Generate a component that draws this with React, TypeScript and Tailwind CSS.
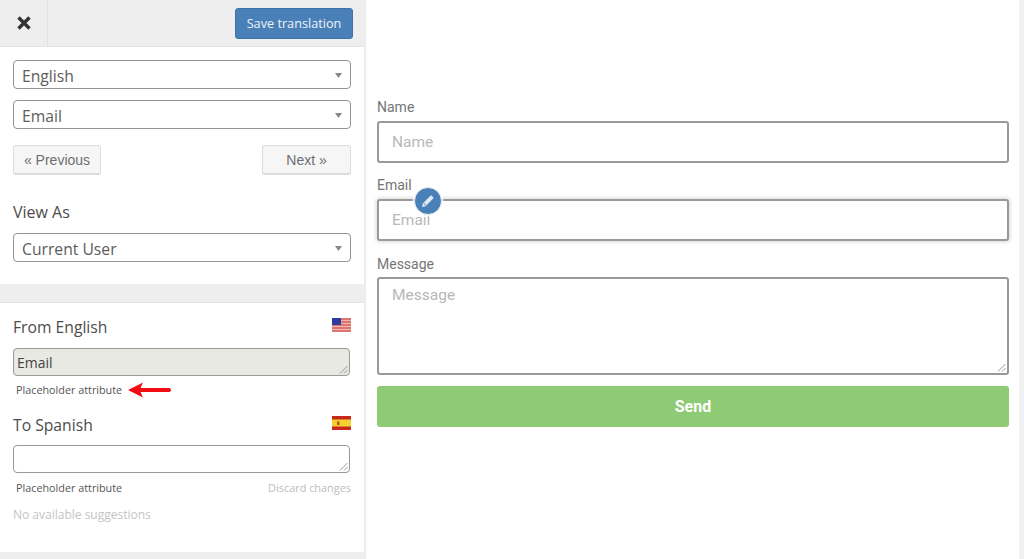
const sideFont = "font-['Open_Sans','Noto_Sans',sans-serif]";

function Caret() {
  return (
    <svg width="7" height="5" viewBox="0 0 7 5" className="shrink-0 mr-[1px] mt-[1px]">
      <path d="M0 0h7L3.5 5z" fill="#888" />
    </svg>
  );
}

function Select({ label }: { label: string }) {
  return (
    <div className="h-[29px] rounded-[4px] border border-[#949494] bg-white pl-[8px] pr-[7px] flex items-center justify-between">
      <span className="text-[15.7px] leading-[26px] text-[#5c5c5c] pt-[2px]">{label}</span>
      <Caret />
    </div>
  );
}

function Grip() {
  return (
    <svg width="9" height="9" viewBox="0 0 9 9" className="absolute right-[1px] bottom-[1px]">
      <path d="M8.5 1L1 8.5M8.5 5L5 8.5" stroke="#999" strokeWidth="1" fill="none" />
    </svg>
  );
}

function FlagUS() {
  return (
    <svg width="19" height="14" viewBox="0 0 19 14">
      <rect width="19" height="14" fill="#efb5ac" />
      <path d="M0 1h19M0 4h19M0 7h19M0 10h19M0 13h19" stroke="#d4605c" strokeWidth="1.4" />
      <rect width="9" height="7" fill="#2f3a9e" />
    </svg>
  );
}

function FlagES() {
  return (
    <svg width="19" height="14" viewBox="0 0 19 14">
      <rect width="19" height="14" fill="#c9281e" />
      <rect y="3.5" width="19" height="7" fill="#f6d02f" />
      <rect x="5" y="5.5" width="2.5" height="3.5" fill="#b5561c" />
    </svg>
  );
}

function Sidebar() {
  return (
    <aside className={`${sideFont} w-[366px] shrink-0 h-full flex flex-col bg-white border-r-2 border-[#ececec]`}>
      <div className="h-[47px] shrink-0 bg-[#eeeeee] border-b border-[#e4e4e4] flex items-center justify-between pr-[11px]">
        <div className="w-[48px] h-full border-r border-[#e2e2e2] flex items-center justify-center">
          <svg width="16" height="16" viewBox="0 0 16 16">
            <path d="M2.5 2.5l11 11M13.5 2.5l-11 11" stroke="#333" strokeWidth="3.4" fill="none" />
          </svg>
        </div>
        <button
          type="button"
          className="w-[118px] h-[31px] rounded-[3px] bg-[#4a80b8] border border-[#3f72a6] text-[12.7px] pt-[1px] text-[#eef3f8]"
        >
          Save translation
        </button>
      </div>

      <div className="pl-[13px] pr-[13px] pt-[13px] flex flex-col">
        <Select label="English" />
        <div className="mt-[11px]">
          <Select label="Email" />
        </div>
        <div className="mt-[16px] flex justify-between">
          <button
            type="button"
            className="w-[88px] h-[30px] pt-[1px] rounded-[3px] bg-[#f6f6f6] border border-[#dcdcdc] border-b-2 font-['Liberation_Sans',sans-serif] text-[14px] text-[#6e6e6e]"
          >
            « Previous
          </button>
          <button
            type="button"
            className="w-[89px] h-[30px] pt-[1px] rounded-[3px] bg-[#f6f6f6] border border-[#dcdcdc] border-b-2 font-['Liberation_Sans',sans-serif] text-[14px] text-[#6e6e6e]"
          >
            Next »
          </button>
        </div>
        <div className="mt-[25px] text-[16px] leading-[24px] text-[#4c4c4c]">View As</div>
        <div className="mt-[9px]">
          <Select label="Current User" />
        </div>
      </div>

      <div className="mt-[22px] h-[19px] shrink-0 bg-[#eeeeee] border-b border-[#e4e4e4]" />

      <div className="flex-1 pl-[13px] pr-[13px] flex flex-col">
        <div className="mt-[12px] h-[24px] flex items-center justify-between">
          <span className="text-[15.7px] leading-[24px] text-[#4c4c4c]">From English</span>
          <span className="mb-[5px]"><FlagUS /></span>
        </div>
        <div className="relative mt-[9px] mr-[1px] h-[28px] rounded-[4px] border border-[#999] bg-[#e9e9e4] pl-[3px] flex items-center">
          <span className="text-[14px] text-[#444]">Email</span>
          <Grip />
        </div>
        <div className="mt-[6px] pl-[3px] h-[16px] flex items-center gap-[6px]">
          <span className="text-[10.8px] leading-[16px] text-[#555]">Placeholder attribute</span>
          <svg width="43" height="18" viewBox="0 0 43 18" className="-mt-[1px]">
            <path d="M0 9L15 1.5 12.5 7H41a2 2 0 010 4H12.5L15 16.5z" fill="#f00c12" />
          </svg>
        </div>
        <div className="mt-[15px] h-[24px] flex items-center justify-between">
          <span className="text-[15.7px] leading-[24px] text-[#4c4c4c]">To Spanish</span>
          <span className="mb-[5px]"><FlagES /></span>
        </div>
        <div className="relative mt-[8px] mr-[1px] h-[28px] rounded-[4px] border border-[#999] bg-white">
          <Grip />
        </div>
        <div className="mt-[7px] pl-[3px] h-[16px] flex items-center justify-between">
          <span className="text-[10.8px] leading-[16px] text-[#555]">Placeholder attribute</span>
          <span className="text-[10.9px] leading-[16px] text-[#bdbdbd]">Discard changes</span>
        </div>
        <div className="mt-[11px] text-[12px] leading-[16px] text-[#c4c4c4]">No available suggestions</div>
      </div>

      <div className="h-[7px] shrink-0 bg-[#eeeeee]" />
    </aside>
  );
}

function Field({ label, focused }: { label: string; focused?: boolean }) {
  return (
    <div className="flex flex-col">
      <label className="h-[25px] text-[14px] leading-[18px] text-[#757575] pt-[2px]">{label}</label>
      <div
        className={`h-[42px] rounded-[3px] border-2 border-[#999] bg-white pl-[13px] pt-[1px] flex items-center text-[15.5px] text-[#b8b8b8] ${
          focused ? "shadow-[0_0_3px_2px_#e6e6e6]" : ""
        }`}
      >
        {label}
      </div>
    </div>
  );
}

function ContactForm() {
  return (
    <main className="flex-1 min-w-0 pl-[11px] pr-[10px] pt-[96px] bg-white font-['Roboto',sans-serif]">
      <Field label="Name" />
      <div className="relative mt-[11px]">
        <Field label="Email" focused />
        <div className="absolute left-[37px] top-[13px] w-[28px] h-[28px] rounded-full bg-[#4a80b8] border border-[#e8eef4] shadow-[0_0_2px_1px_#ffffff] flex items-center justify-center">
          <svg width="14" height="14" viewBox="0 0 14 14">
            <path d="M1 13l.8-3.6L9.4 1.8a1 1 0 011.4 0l1.4 1.4a1 1 0 010 1.4L4.6 12.2z" fill="#dfe9f3" />
            <path d="M2.6 9l2.4 2.4" stroke="#4a80b8" strokeWidth="1" />
          </svg>
        </div>
      </div>
      <div className="mt-[12px]">
        <label className="block h-[24px] text-[14px] leading-[18px] text-[#757575] pt-[2px]">Message</label>
        <div className="relative h-[98px] rounded-[3px] border-2 border-[#999] bg-white pl-[13px] pt-[5px] text-[15.5px] text-[#b8b8b8]">
          Message
          <Grip />
        </div>
      </div>
      <button
        type="button"
        className="mt-[11px] w-full h-[41px] rounded-[3px] bg-[#8fcb74] text-[16px] font-bold text-white"
      >
        Send
      </button>
    </main>
  );
}

export default function App() {
  return (
    <div className="h-[559px] w-[1024px] overflow-hidden flex bg-white">
      <Sidebar />
      <ContactForm />
      <div className="w-[5px] shrink-0 bg-[#f1f1f1]" />
    </div>
  );
}
